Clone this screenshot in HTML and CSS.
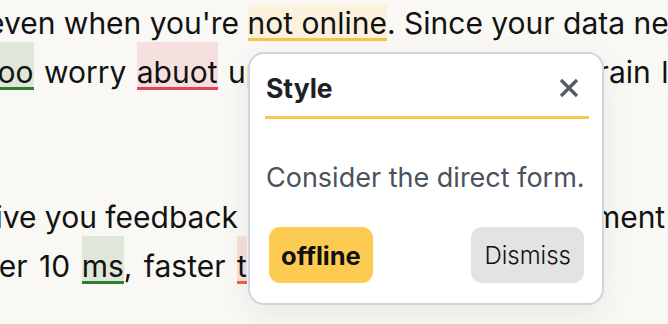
FILE: index.html
```html
<!DOCTYPE html>
<html lang="en">
<head>
    <meta charset="UTF-8">
    <meta name="viewport" content="width=device-width, initial-scale=1.0">
    <title>Style suggestion</title>
    <link rel="stylesheet" href="styles.css">
</head>
<body>
    <div class="doc">
        <p class="para">
            <span class="line line-1">even when you're <mark class="hl hl-style">not online</mark>. Since your data never leaves</span>
            <span class="line line-2"><mark class="hl hl-grammar">too</mark> worry <mark class="hl hl-spell">abuot</mark> uploading your words to train large models</span>
        </p>
        <p class="para">
            <span class="line line-3">give you feedback in real time on every segment</span>
            <span class="line line-4">under 10 <mark class="hl hl-grammar">ms</mark>, faster <mark class="hl hl-other">t</mark>han you type.</span>
        </p>
    </div>

    <div class="popover">
        <div class="popover-head">
            <h3>Style</h3>
            <button class="close" aria-label="Close">
                <svg width="20" height="20" viewBox="0 0 20 20">
                    <path d="M2 2 L18 18 M18 2 L2 18" stroke="#535a65" stroke-width="3.2" fill="none"/>
                </svg>
            </button>
        </div>
        <p class="popover-text">Consider the direct form.</p>
        <div class="popover-actions">
            <button class="btn btn-fix">offline</button>
            <button class="btn btn-dismiss">Dismiss</button>
        </div>
    </div>
</body>
</html>
```

FILE: styles.css
```css
body {
    background-color: #f9f8f4;
    color: #121212;
    font-family: Inter, "Noto Sans", sans-serif;
    margin: 0;
    overflow: hidden;
    height: 324px;
    position: relative;
}
.doc {
    padding-top: 1px;
}
.para {
    font-size: 30px;
    line-height: 49px;
    margin: 0;
    white-space: nowrap;
}
.para + .para {
    margin-top: 96px;
}
.line {
    display: block;
}
.line-1 {
    margin-top: -2px;
    margin-left: -13px;
}
.line-2 {
    margin-left: -12px;
    word-spacing: 2px;
}
.line-3 {
    margin-left: -23px;
}
.line-4 {
    margin-left: -55px;
    word-spacing: 3px;
}
.hl {
    color: inherit;
    padding-top: 12px;
}
.hl-style {
    background-color: #fbf2dd;
    box-shadow: inset 0 -3px 0 #f7c548;
    padding-top: 0;
}
.hl-grammar {
    background-color: #dee7d8;
    box-shadow: inset 0 -3px 0 #2f7d32;
}
.hl-spell {
    background-color: #f6e0df;
    box-shadow: inset 0 -3px 0 #e0435b;
}
.hl-other {
    background-color: #f6e1da;
    box-shadow: inset 0 -3px 0 #e8693f;
}
.popover {
    position: absolute;
    left: 248px;
    top: 52px;
    width: 356px;
    height: 253px;
    box-sizing: border-box;
    background-color: #ffffff;
    border: 2px solid #cfd5df;
    border-radius: 16px;
    box-shadow: 0 10px 32px rgba(0, 0, 0, 0.07);
}
.popover-head {
    display: flex;
    align-items: center;
    justify-content: space-between;
    margin: 0 13px 0 15px;
    padding: 18px 0 12px 1px;
    border-bottom: 3px solid #f9c94e;
}
.popover-head h3 {
    margin: 0;
    font-size: 26.5px;
    line-height: 32px;
    font-weight: 700;
    color: #1d2025;
}
.close {
    background: none;
    border: none;
    padding: 0;
    margin-right: 10px;
    width: 20px;
    height: 20px;
    display: flex;
}
.popover-text {
    margin: 43px 0 0 16px;
    font-size: 27px;
    line-height: 32px;
    color: #4b525c;
}
.popover-actions {
    display: flex;
    justify-content: space-between;
    padding: 33px 18px 0 19px;
}
.btn {
    font-family: Inter, "Noto Sans", sans-serif;
    height: 56px;
    border: none;
    border-radius: 11px;
    padding: 0 13px;
    font-size: 24px;
    color: #111;
}
.btn-fix {
    background-color: #fecb52;
    font-weight: 700;
    font-size: 25.5px;
    padding: 0 12px;
}
.btn-dismiss {
    background-color: #e3e3e3;
    font-weight: 300;
}
```
